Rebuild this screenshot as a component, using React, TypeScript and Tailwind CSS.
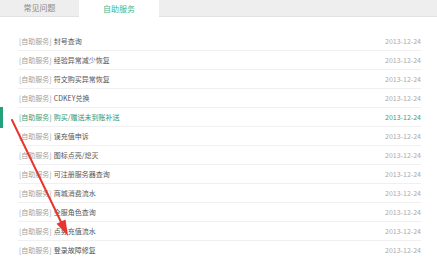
import React from 'react';

interface Item {
  title: string;
  date: string;
  active?: boolean;
}

const items: Item[] = [
  { title: '封号查询', date: '2013-12-24' },
  { title: '经验异常减少恢复', date: '2013-12-24' },
  { title: '符文购买异常恢复', date: '2013-12-24' },
  { title: 'CDKEY兑换', date: '2013-12-24' },
  { title: '购买/赠送未到账补送', date: '2013-12-24', active: true },
  { title: '误充值申诉', date: '2013-12-24' },
  { title: '图标点亮/熄灭', date: '2013-12-24' },
  { title: '可注册服务器查询', date: '2013-12-24' },
  { title: '商城消费流水', date: '2013-12-24' },
  { title: '全服角色查询', date: '2013-12-24' },
  { title: '点券充值流水', date: '2013-12-24' },
  { title: '登录故障修复', date: '2013-12-24' },
];

const App: React.FC = () => {
  return (
    <div
      className="relative w-[437px] h-[258px] overflow-hidden bg-white"
      style={{ fontFamily: '"Noto Sans CJK SC", "Noto Sans", sans-serif' }}
    >
      {/* tabs */}
      <div className="flex h-[17px] bg-[#eeeeee] border-b border-[#e2e2e2]">
        <div className="w-[79px] flex items-center justify-center text-[8px] text-[#8a8a8a]">常见问题</div>
        <div className="w-[80px] -mb-px flex items-center justify-center bg-white text-[8px] text-[#3cb88c]">
          自助服务
        </div>
      </div>

      {/* list */}
      <div className="pt-[15px]">
        {items.map((item) => (
          <div key={item.title} className="flex h-[19px]">
            <div className={`w-[3px] ${item.active ? 'bg-[#22a27a] -mt-[1px] h-[21px]' : ''}`} />
            <div className="ml-[15px] w-[403px] flex items-center justify-between border-b border-[#f0f0f0] text-[7px]">
              <span className="pl-[1px]">
                <span className={item.active ? 'text-[#3a9c7c]' : 'text-[#a0a0a0]'}>[自助服务]</span>
                <span className={item.active ? 'text-[#2f9674] ml-[2px]' : 'text-[#555555] ml-[2px]'}>{item.title}</span>
              </span>
              <span className={item.active ? 'text-[#3a9c7c]' : 'text-[#aaaaaa]'}>{item.date}</span>
            </div>
          </div>
        ))}
      </div>

      {/* annotation arrow */}
      <svg className="absolute left-0 top-0 pointer-events-none" width="437" height="258" viewBox="0 0 437 258">
        <line x1="12" y1="120" x2="62" y2="224" stroke="#e8352e" strokeWidth="2" strokeLinecap="round" />
        <polygon points="56.5,223.8 65.5,219.4 68,236" fill="#e8352e" />
      </svg>
    </div>
  );
};

export default App;
